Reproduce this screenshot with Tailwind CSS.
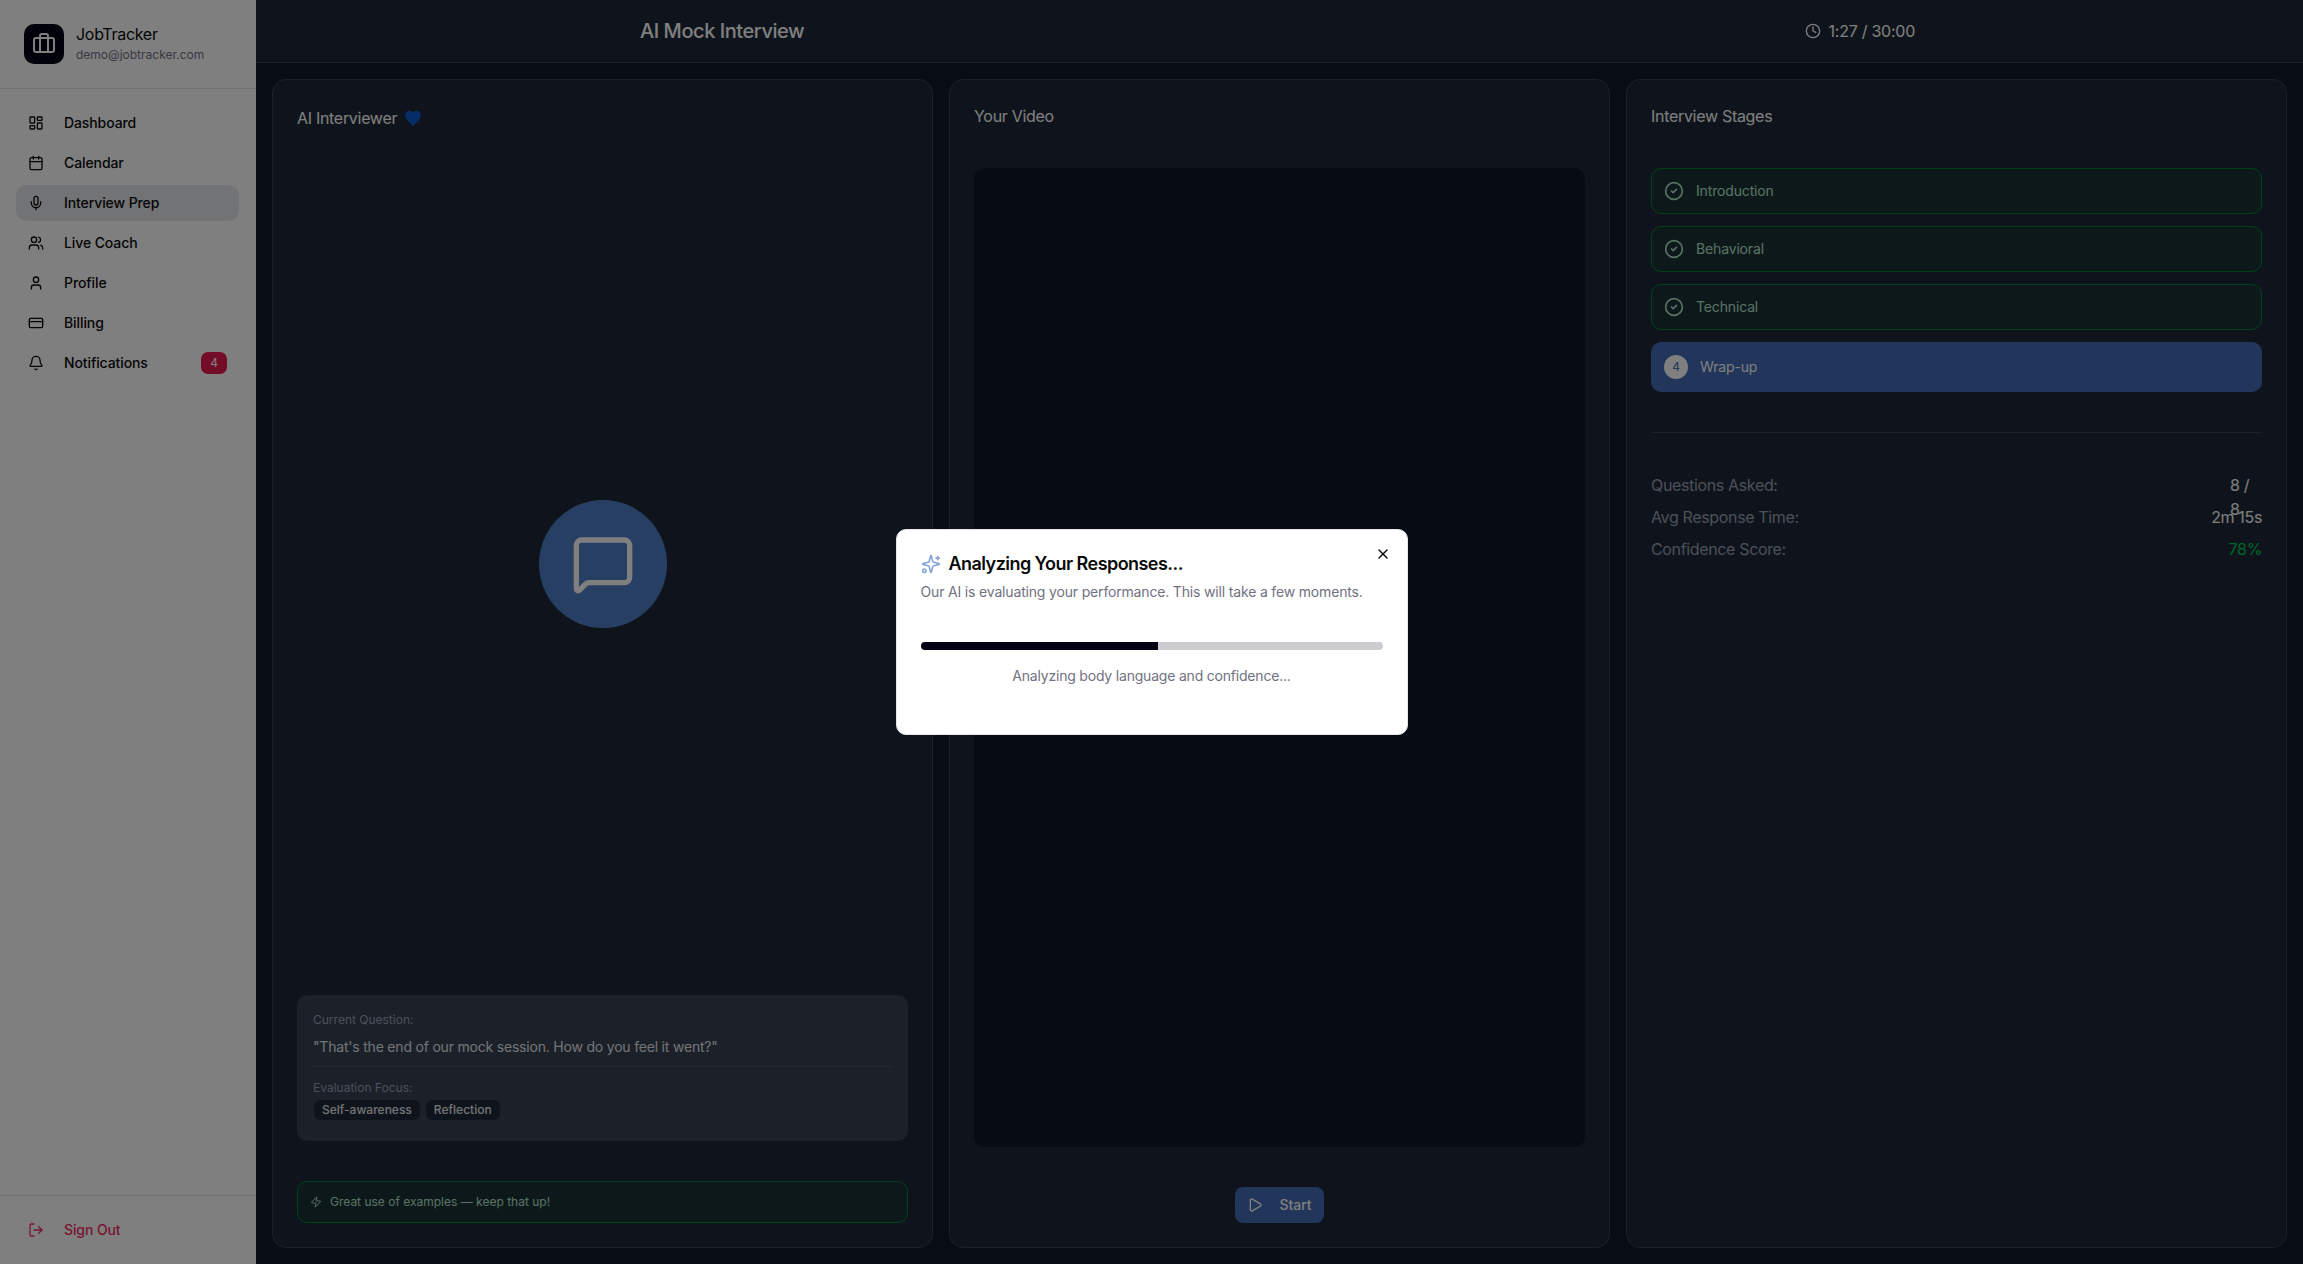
<!DOCTYPE html>
<html lang="en">
<head>
    <meta charset="UTF-8">
    <meta name="viewport" content="width=device-width, initial-scale=1.0">
    <title>AI Mock Interview</title>
    <script src="https://cdn.jsdelivr.net/npm/@tailwindcss/browser@4"></script>
</head>
<body class="h-screen w-screen overflow-hidden bg-gray-900 font-[Inter,sans-serif]">

    <div class="flex h-full w-full">

        <!-- sidebar -->
        <aside class="flex h-full w-[256px] shrink-0 flex-col bg-white text-[#0a0a0a]">
            <div class="flex h-[89px] gap-3 border-b border-gray-200 px-6 pt-6">
                <div class="flex size-10 items-center justify-center rounded-[10px] bg-[#030213] text-white">
                    <svg class="size-6" viewBox="0 0 24 24" fill="none" stroke="currentColor" stroke-width="2" stroke-linecap="round" stroke-linejoin="round"><path d="M16 20V4a2 2 0 0 0-2-2h-4a2 2 0 0 0-2 2v16"/><rect width="20" height="14" x="2" y="6" rx="2"/></svg>
                </div>
                <div class="-mt-0.5">
                    <div class="text-base leading-6 tracking-[-0.3px]">JobTracker</div>
                    <div class="mt-px text-xs leading-4 text-[#717182]">demo@jobtracker.com</div>
                </div>
            </div>

            <nav class="flex flex-1 flex-col gap-1 py-4 pr-[17px] pl-4 text-sm font-medium tracking-[-0.1px]">
                <div class="flex h-9 items-center gap-5 rounded-[10px] px-3">
                    <svg class="size-4" viewBox="0 0 24 24" fill="none" stroke="currentColor" stroke-width="2" stroke-linecap="round" stroke-linejoin="round"><rect width="7" height="9" x="3" y="3" rx="1"/><rect width="7" height="5" x="14" y="3" rx="1"/><rect width="7" height="9" x="14" y="12" rx="1"/><rect width="7" height="5" x="3" y="16" rx="1"/></svg>
                    Dashboard
                </div>
                <div class="flex h-9 items-center gap-5 rounded-[10px] px-3">
                    <svg class="size-4" viewBox="0 0 24 24" fill="none" stroke="currentColor" stroke-width="2" stroke-linecap="round" stroke-linejoin="round"><path d="M8 2v4"/><path d="M16 2v4"/><rect width="18" height="18" x="3" y="4" rx="2"/><path d="M3 10h18"/></svg>
                    Calendar
                </div>
                <div class="flex h-9 items-center gap-5 rounded-[10px] bg-gray-200 px-3">
                    <svg class="size-4" viewBox="0 0 24 24" fill="none" stroke="currentColor" stroke-width="2" stroke-linecap="round" stroke-linejoin="round"><path d="M12 19v3"/><path d="M19 10v2a7 7 0 0 1-14 0v-2"/><rect x="9" y="2" width="6" height="13" rx="3"/></svg>
                    Interview Prep
                </div>
                <div class="flex h-9 items-center gap-5 rounded-[10px] px-3">
                    <svg class="size-4" viewBox="0 0 24 24" fill="none" stroke="currentColor" stroke-width="2" stroke-linecap="round" stroke-linejoin="round"><path d="M16 21v-2a4 4 0 0 0-4-4H6a4 4 0 0 0-4 4v2"/><path d="M16 3.128a4 4 0 0 1 0 7.744"/><path d="M22 21v-2a4 4 0 0 0-3-3.87"/><circle cx="9" cy="7" r="4"/></svg>
                    Live Coach
                </div>
                <div class="flex h-9 items-center gap-5 rounded-[10px] px-3">
                    <svg class="size-4" viewBox="0 0 24 24" fill="none" stroke="currentColor" stroke-width="2" stroke-linecap="round" stroke-linejoin="round"><path d="M19 21v-2a4 4 0 0 0-4-4H9a4 4 0 0 0-4 4v2"/><circle cx="12" cy="7" r="4"/></svg>
                    Profile
                </div>
                <div class="flex h-9 items-center gap-5 rounded-[10px] px-3">
                    <svg class="size-4" viewBox="0 0 24 24" fill="none" stroke="currentColor" stroke-width="2" stroke-linecap="round" stroke-linejoin="round"><rect width="20" height="14" x="2" y="5" rx="2"/><line x1="2" x2="22" y1="10" y2="10"/></svg>
                    Billing
                </div>
                <div class="flex h-9 items-center gap-5 rounded-[10px] px-3">
                    <svg class="size-4" viewBox="0 0 24 24" fill="none" stroke="currentColor" stroke-width="2" stroke-linecap="round" stroke-linejoin="round"><path d="M10.268 21a2 2 0 0 0 3.464 0"/><path d="M3.262 15.326A1 1 0 0 0 4 17h16a1 1 0 0 0 .74-1.673C19.41 13.956 18 12.499 18 8A6 6 0 0 0 6 8c0 4.499-1.411 5.956-2.738 7.326"/></svg>
                    Notifications
                    <span class="ml-auto flex h-[22px] w-[26px] items-center justify-center rounded-[7px] bg-[#e7184c] text-xs font-normal text-white">4</span>
                </div>
            </nav>

            <div class="border-t border-gray-200 p-4">
                <div class="flex h-9 items-center gap-5 px-3 text-sm font-medium tracking-[-0.1px] text-[#f02c62]">
                    <svg class="size-4" viewBox="0 0 24 24" fill="none" stroke="currentColor" stroke-width="2" stroke-linecap="round" stroke-linejoin="round"><path d="m16 17 5-5-5-5"/><path d="M21 12H9"/><path d="M9 21H5a2 2 0 0 1-2-2V5a2 2 0 0 1 2-2h4"/></svg>
                    Sign Out
                </div>
            </div>
        </aside>

        <!-- main -->
        <main class="flex h-full min-w-0 flex-1 flex-col">
            <header class="flex h-[63px] shrink-0 items-center justify-between border-b border-gray-700 bg-gray-800 pr-[388px] pl-[384px] text-white">
                <h1 class="text-xl font-medium tracking-[-0.45px]">AI Mock Interview</h1>
                <div class="flex items-center gap-2 text-base tracking-[-0.25px]">
                    <svg class="size-4" viewBox="0 0 24 24" fill="none" stroke="currentColor" stroke-width="2" stroke-linecap="round" stroke-linejoin="round"><circle cx="12" cy="12" r="10"/><polyline points="12 6 12 12 16 14"/></svg>
                    1:27 / 30:00
                </div>
            </header>

            <div class="grid min-h-0 flex-1 grid-cols-3 gap-4 p-4">

                <!-- interviewer -->
                <section class="flex flex-col rounded-[14px] border border-gray-700 bg-gray-800 p-6 text-white">
                    <div class="flex h-7 items-center gap-[7px] text-base tracking-[-0.3px]">
                        AI Interviewer
                        <svg class="h-[17px] w-[18px]" viewBox="0 0 24 24"><path fill="#0f5bd0" d="M12 23C8 18 1 13.500 1 7.500 1 3.500 3.800 1 7 1c2.200 0 4 1.200 5 3 1-1.800 2.800-3 5-3 3.200 0 6 2.500 6 6.500C23 13.500 16 18 12 23z"/></svg>
                    </div>
                    <div class="flex flex-1 items-center justify-center">
                        <div class="flex size-32 items-center justify-center rounded-full bg-[#507ec8]">
                            <svg class="size-16" viewBox="0 0 24 24" fill="none" stroke="currentColor" stroke-width="2" stroke-linecap="round" stroke-linejoin="round"><path d="M22 17a2 2 0 0 1-2 2H6.828a2 2 0 0 0-1.414.586l-2.202 2.202A.71.71 0 0 1 2 21.286V5a2 2 0 0 1 2-2h16a2 2 0 0 1 2 2z"/></svg>
                        </div>
                    </div>
                    <div class="h-[146px] rounded-[10px] bg-gray-700 px-4 pt-[17px]">
                        <div class="text-xs leading-4 text-gray-400">Current Question:</div>
                        <p class="mt-[9px] border-b border-gray-600 pb-[9px] text-sm leading-5 tracking-[-0.2px] text-gray-200">"That's the end of our mock session. How do you feel it went?"</p>
                        <div class="mt-[13px] text-xs leading-4 text-gray-400">Evaluation Focus:</div>
                        <div class="mt-[3px] flex gap-1">
                            <span class="flex h-[22px] items-center rounded-lg border border-gray-700 bg-gray-800 px-2 text-xs font-medium text-gray-200">Self-awareness</span>
                            <span class="flex h-[22px] items-center rounded-lg border border-gray-700 bg-gray-800 px-2 text-xs font-medium text-gray-200">Reflection</span>
                        </div>
                    </div>
                    <div class="mt-10 flex h-[42px] items-center gap-2 rounded-[10px] border border-green-700 bg-green-900/20 px-3 text-xs text-[#b4e4c8]">
                        <svg class="size-3" viewBox="0 0 24 24" fill="none" stroke="currentColor" stroke-width="2" stroke-linecap="round" stroke-linejoin="round"><path d="M4 14a1 1 0 0 1-.78-1.630l9.900-10.200a.5.5 0 0 1 .86.46l-1.920 6.020A1 1 0 0 0 13 10h7a1 1 0 0 1 .78 1.630l-9.900 10.200a.5.5 0 0 1-.86-.46l1.920-6.020A1 1 0 0 0 11 14z"/></svg>
                        Great use of examples — keep that up!
                    </div>
                </section>

                <!-- video -->
                <section class="flex flex-col rounded-[14px] border border-gray-700 bg-gray-800 p-6 text-white">
                    <div class="text-base leading-6 tracking-[-0.3px]">Your Video</div>
                    <div class="mt-10 min-h-0 flex-1 rounded-[10px] bg-[#0e1625]"></div>
                    <div class="mt-10 flex justify-center">
                        <button class="flex h-9 w-[89px] items-center justify-center gap-4 rounded-lg bg-[#426cb4] text-sm font-medium text-white">
                            <svg class="size-4" viewBox="0 0 24 24" fill="none" stroke="currentColor" stroke-width="2" stroke-linecap="round" stroke-linejoin="round"><path d="M5 5a2 2 0 0 1 3.008-1.728l11.997 6.998a2 2 0 0 1 .003 3.458l-12 7A2 2 0 0 1 5 19z"/></svg>
                            Start
                        </button>
                    </div>
                </section>

                <!-- stages -->
                <section class="flex flex-col rounded-[14px] border border-gray-700 bg-gray-800 p-6 text-white">
                    <div class="text-base leading-6 tracking-[-0.3px]">Interview Stages</div>
                    <div class="mt-10 flex flex-col gap-3 text-sm tracking-[-0.15px]">
                        <div class="flex h-[46px] items-center gap-3 rounded-[10px] border border-green-700 bg-green-900/20 px-3 text-[#b4e4c8]">
                            <svg class="size-5" viewBox="0 0 24 24" fill="none" stroke="currentColor" stroke-width="2" stroke-linecap="round" stroke-linejoin="round"><circle cx="12" cy="12" r="10"/><path d="m9 12 2 2 4-4"/></svg>
                            Introduction
                        </div>
                        <div class="flex h-[46px] items-center gap-3 rounded-[10px] border border-green-700 bg-green-900/20 px-3 text-[#b4e4c8]">
                            <svg class="size-5" viewBox="0 0 24 24" fill="none" stroke="currentColor" stroke-width="2" stroke-linecap="round" stroke-linejoin="round"><circle cx="12" cy="12" r="10"/><path d="m9 12 2 2 4-4"/></svg>
                            Behavioral
                        </div>
                        <div class="flex h-[46px] items-center gap-3 rounded-[10px] border border-green-700 bg-green-900/20 px-3 text-[#b4e4c8]">
                            <svg class="size-5" viewBox="0 0 24 24" fill="none" stroke="currentColor" stroke-width="2" stroke-linecap="round" stroke-linejoin="round"><circle cx="12" cy="12" r="10"/><path d="m9 12 2 2 4-4"/></svg>
                            Technical
                        </div>
                        <div class="flex h-[50px] items-center gap-3 rounded-[10px] bg-[#426cb4] px-[13px] text-white">
                            <span class="flex size-6 items-center justify-center rounded-full bg-white text-xs text-[#426cb4]">4</span>
                            Wrap-up
                        </div>
                    </div>
                    <div class="mt-10 flex flex-col gap-2 border-t border-gray-700 pt-10 text-base tracking-[-0.35px]">
                        <div class="flex h-6 justify-between leading-6">
                            <span class="text-gray-400">Questions Asked:</span>
                            <span class="w-8 text-white">8 / 8</span>
                        </div>
                        <div class="flex h-6 justify-between leading-6">
                            <span class="text-gray-400">Avg Response Time:</span>
                            <span class="text-white">2m 15s</span>
                        </div>
                        <div class="flex h-6 justify-between leading-6">
                            <span class="text-gray-400">Confidence Score:</span>
                            <span class="text-green-500">78%</span>
                        </div>
                    </div>
                </section>
            </div>
        </main>
    </div>

    <!-- dialog -->
    <div class="fixed inset-0 flex items-center justify-center bg-black/50">
        <div class="relative w-[512px] rounded-[10px] border border-gray-200 bg-white p-6">
            <button class="absolute top-4 right-4 text-[#0a0a0a]">
                <svg class="size-4" viewBox="0 0 24 24" fill="none" stroke="currentColor" stroke-width="2" stroke-linecap="round" stroke-linejoin="round"><path d="M18 6 6 18"/><path d="m6 6 12 12"/></svg>
            </button>
            <div class="flex h-5 items-center gap-2">
                <svg class="size-5 text-[#86a5db]" viewBox="0 0 24 24" fill="none" stroke="currentColor" stroke-width="2" stroke-linecap="round" stroke-linejoin="round"><path d="M9.937 15.500A2 2 0 0 0 8.500 14.063l-6.135-1.582a.5.5 0 0 1 0-.962L8.500 9.936A2 2 0 0 0 9.937 8.500l1.582-6.135a.5.5 0 0 1 .963 0L14.063 8.500A2 2 0 0 0 15.500 9.937l6.135 1.581a.5.5 0 0 1 0 .964L15.500 14.063a2 2 0 0 0-1.437 1.437l-1.582 6.135a.5.5 0 0 1-.963 0z"/><path d="M20 3v4"/><path d="M22 5h-4"/><circle cx="4" cy="20" r="2"/></svg>
                <h2 class="text-lg font-semibold tracking-[-0.55px] text-[#0a0a0a]">Analyzing Your Responses...</h2>
            </div>
            <p class="mt-2 text-sm leading-5 tracking-[-0.17px] text-[#717182]">Our AI is evaluating your performance. This will take a few moments.</p>
            <div class="mt-10 h-2 overflow-hidden rounded-full bg-[#cbcbd0]">
                <div class="h-full bg-[#030213]" style="width: 51.3%"></div>
            </div>
            <p class="mt-4 mb-6 text-center text-sm leading-5 tracking-[-0.2px] text-[#717182]">Analyzing body language and confidence...</p>
        </div>
    </div>

</body>
</html>
